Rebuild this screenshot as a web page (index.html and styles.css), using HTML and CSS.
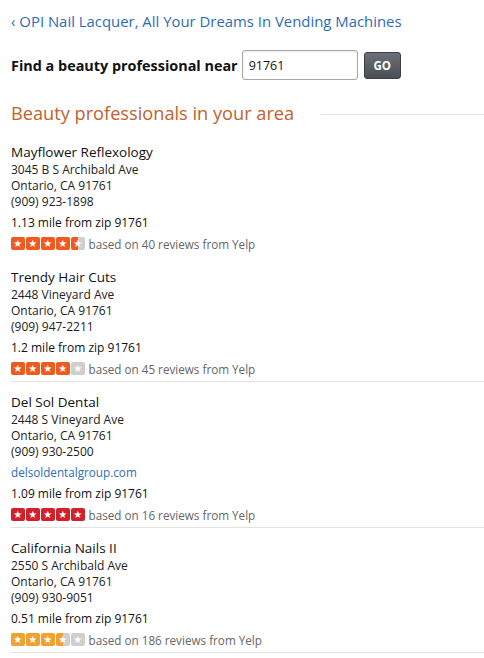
FILE: index.html
```html
<!DOCTYPE html>
<html>
<head>
<meta charset="utf-8">
<link rel="stylesheet" href="styles.css">
</head>
<body>
<div class="page">
  <a class="back" href="#">‹ OPI Nail Lacquer, All Your Dreams In Vending Machines</a>
  <form class="search">
    <label class="search-label">Find a beauty professional near</label>
    <input class="zip" type="text" value="91761">
    <button class="go" type="button">GO</button>
  </form>
  <div class="heading-row">
    <h2 class="heading">Beauty professionals in your area</h2>
    <div class="heading-rule"></div>
  </div>
  <ul class="list">
    <li class="item first">
      <div class="name">Mayflower Reflexology</div>
      <div class="addr">3045 B S Archibald Ave</div>
      <div class="addr">Ontario, CA 91761</div>
      <div class="addr">(909) 923-1898</div>
      <div class="dist">1.13 mile from zip 91761</div>
      <div class="rating">
        <span class="stars s45"><i class="on"></i><i class="on"></i><i class="on"></i><i class="on"></i><i class="half"></i></span>
        <span class="based">based on 40 reviews from Yelp</span>
      </div>
    </li>
    <li class="item">
      <div class="name">Trendy Hair Cuts</div>
      <div class="addr">2448 Vineyard Ave</div>
      <div class="addr">Ontario, CA 91761</div>
      <div class="addr">(909) 947-2211</div>
      <div class="dist">1.2 mile from zip 91761</div>
      <div class="rating">
        <span class="stars s40"><i class="on"></i><i class="on"></i><i class="on"></i><i class="on"></i><i></i></span>
        <span class="based">based on 45 reviews from Yelp</span>
      </div>
    </li>
    <li class="item ruled">
      <div class="name">Del Sol Dental</div>
      <div class="addr">2448 S Vineyard Ave</div>
      <div class="addr">Ontario, CA 91761</div>
      <div class="addr">(909) 930-2500</div>
      <a class="site" href="#">delsoldentalgroup.com</a>
      <div class="dist">1.09 mile from zip 91761</div>
      <div class="rating">
        <span class="stars s50"><i class="on"></i><i class="on"></i><i class="on"></i><i class="on"></i><i class="on"></i></span>
        <span class="based">based on 16 reviews from Yelp</span>
      </div>
    </li>
    <li class="item ruled last">
      <div class="name">California Nails II</div>
      <div class="addr">2550 S Archibald Ave</div>
      <div class="addr">Ontario, CA 91761</div>
      <div class="addr">(909) 930-9051</div>
      <div class="dist">0.51 mile from zip 91761</div>
      <div class="rating">
        <span class="stars s35"><i class="on"></i><i class="on"></i><i class="on"></i><i class="half"></i><i></i></span>
        <span class="based">based on 186 reviews from Yelp</span>
      </div>
    </li>
  </ul>
</div>
</body>
</html>
```
FILE: styles.css
```css
* { box-sizing: border-box; }
html, body { margin: 0; padding: 0; background: #fff; }
body {
  font-family: "Open Sans", "Noto Sans", "Liberation Sans", sans-serif;
  color: #111;
}
.page { padding: 10px 0 0 11px; }
.back {
  display: block;
  color: #2e6db4;
  text-decoration: none;
  font-size: 14.9px;
  line-height: 22px;
}
.search {
  display: flex;
  align-items: center;
  margin-top: 18px;
  height: 30px;
}
.search-label {
  font-weight: 700;
  font-size: 14.4px;
  color: #111;
  margin-right: 4px;
}
.zip {
  width: 116px;
  height: 30px;
  border: 1px solid #a6a6a6;
  border-radius: 3px;
  padding: 0 6px;
  font-family: inherit;
  font-size: 12.5px;
  color: #111;
  box-shadow: inset 0 1px 2px rgba(0,0,0,0.08);
}
.go {
  margin-left: 6px;
  width: 37px;
  height: 27px;
  border: 1px solid #3a3d42;
  border-radius: 3px;
  background: linear-gradient(#6c7077, #4a4e55);
  color: #fff;
  font-family: inherit;
  font-weight: 700;
  font-size: 11.5px;
  padding: 0;
}
.heading-row {
  display: flex;
  align-items: center;
  margin-top: 20px;
}
.heading {
  margin: 0;
  font-weight: 400;
  font-size: 18.2px;
  line-height: 26px;
  color: #c2612d;
  white-space: nowrap;
}
.heading-rule {
  flex: 1;
  height: 1px;
  background: #e4e4e4;
  margin-left: 27px;
  margin-top: 2px;
}
.list { list-style: none; margin: 0; padding: 0; }
.item {
  padding: 10px 0 4px 0;
  border-top: 1px solid transparent;
}
.item.first { padding-top: 16px; border-top: 0; }
.ruled { border-top-color: #e2e2e2; }
.item.last { border-bottom: 1px solid #e2e2e2; }
.name {
  font-size: 13.5px;
  line-height: 20px;
  color: #111;
}
.addr {
  font-size: 12px;
  line-height: 16px;
  color: #222;
}
.site {
  display: block;
  margin-top: 4px;
  font-size: 11.7px;
  line-height: 17px;
  color: #2e6db4;
  text-decoration: none;
}
.dist {
  margin-top: 4px;
  font-size: 12px;
  line-height: 17px;
  color: #111;
}
.rating {
  display: flex;
  align-items: center;
  margin-top: 4px;
  height: 17px;
}
.stars { display: flex; gap: 1.5px; margin-right: 4px; }
.stars i {
  display: block;
  width: 13.5px;
  height: 13.5px;
  border-radius: 2px;
  background-color: #cfcfcf;
  position: relative;
}
.stars i::after {
  content: "★";
  position: absolute;
  inset: 0;
  color: #fff;
  font-family: "DejaVu Sans", sans-serif;
  font-size: 10px;
  line-height: 13.5px;
  text-align: center;
}
.s45 i.on, .s40 i.on { background-color: #ef5a1e; }
.s45 i.half { background: linear-gradient(90deg, #ef5a1e 50%, #cfcfcf 50%); }
.s50 i.on { background-color: #d3202a; }
.s35 i.on { background-color: #f0a12f; }
.s35 i.half { background: linear-gradient(90deg, #f0a12f 50%, #cfcfcf 50%); }
.based {
  font-size: 11.7px;
  color: #666;
}
```
